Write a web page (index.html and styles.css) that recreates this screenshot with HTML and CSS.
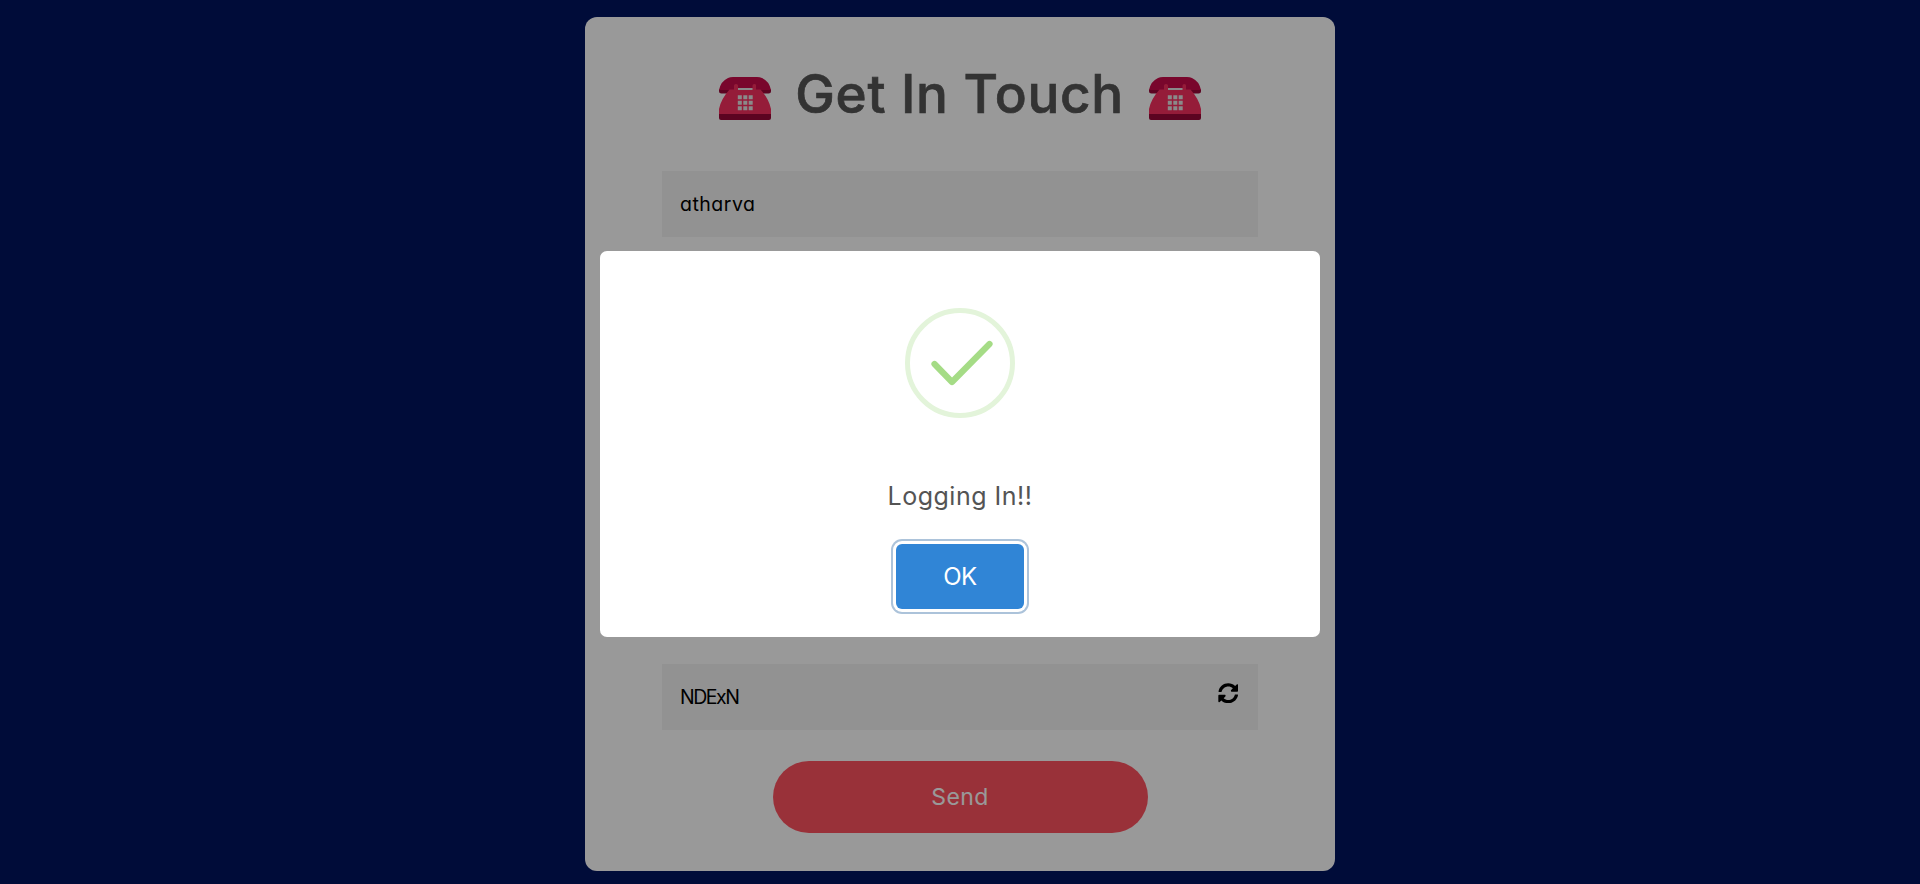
FILE: index.html
```html
<!DOCTYPE html>
<html lang="en">
<head>
<meta charset="utf-8">
<title>Get In Touch</title>
<link rel="stylesheet" href="styles.css">
</head>
<body>
<svg width="0" height="0" class="defs">
  <symbol id="phone" viewBox="0 0 52 43">
    <path fill="#990838" d="M0 12.500h17v4H2.500Q0 16.500 0 14zM35 12.500h17V14q0 2.500-2.500 2.500H35z"/>
    <path fill="#ca0b4a" d="M0 13Q2 4 9 1q2-1 5-1h24q3 0 5 1 7 3 9 12H35v-1H17v1z"/>
    <path fill="#e6e6e6" d="M17.500 11h18v3h-18z"/>
    <path fill="#f92f60" d="M15 8.500Q15 7 17 7t2 1.500V13h14.500V8.500q0-1.500 1.800-1.500T37 8.500V12.500h4.500Q50 22 52 32v6H0v-6Q2 22 10.500 12.500H15z"/>
    <path fill="#990838" d="M0 37h52v4q0 2-2 2H2q-2 0-2-2z"/>
    <path fill="#e6e6e6" d="M18.800 18.200h4v4h-4zm5.500 0h4v4h-4zm5.400 0h4v4h-4zm-10.900 5.500h4v4h-4zm5.500 0h4v4h-4zm5.400 0h4v4h-4zm-10.900 5.500h4v4h-4zm5.500 0h4v4h-4zm5.400 0h4v4h-4z"/>
  </symbol>
</svg>
<main class="card">
  <h1 class="title">
    <svg class="phone"><use href="#phone"/></svg>
    <span class="title-text">Get In Touch</span>
    <svg class="phone"><use href="#phone"/></svg>
  </h1>
  <div class="field"><span class="name">atharva</span></div>
  <div class="field field-captcha">
    <span class="code">NDExN</span>
    <svg class="refresh" viewBox="0 0 512 512"><path d="M370.720 133.280C339.458 104.008 298.888 87.962 255.848 88c-77.458.068-144.328 53.178-162.791 126.850-1.344 5.363-6.122 9.150-11.651 9.150H24.103c-7.498 0-13.194-6.807-11.807-14.176C33.933 94.924 134.813 8 256 8c66.448 0 126.791 26.136 171.315 68.685L463.030 40.970C478.149 25.851 504 36.559 504 57.941V192c0 13.255-10.745 24-24 24H345.941c-21.382 0-32.090-25.851-16.971-40.971l41.750-41.749zM32 296h134.059c21.382 0 32.090 25.851 16.971 40.971l-41.750 41.750c31.262 29.273 71.835 45.319 114.876 45.280 77.418-.070 144.315-53.144 162.787-126.849 1.344-5.363 6.122-9.150 11.651-9.150h57.304c7.498 0 13.194 6.807 11.807 14.176C478.067 417.076 377.187 504 256 504c-66.448 0-126.791-26.136-171.315-68.685L48.970 471.030C33.851 486.149 8 475.441 8 454.059V320c0-13.255 10.745-24 24-24z"/></svg>
  </div>
  <button class="send"><span>Send</span></button>
</main>
<div class="overlay">
  <section class="dialog">
    <svg class="success" viewBox="0 0 110 110">
      <circle cx="55" cy="55" r="52.500" fill="none" stroke="#e3f4da" stroke-width="5"/>
      <path d="M29.500 56L47 74 84.500 36" fill="none" stroke="#a5dc86" stroke-width="6.200" stroke-linecap="round" stroke-linejoin="round"/>
    </svg>
    <p class="message">Logging In!!</p>
    <button class="ok"><span>OK</span></button>
  </section>
</div>
</body>
</html>
```
FILE: styles.css
```css
* { box-sizing: border-box; }
body {
  margin: 0;
  height: 884px;
  padding-top: 17px;
  overflow: hidden;
  background: #00145f;
  font-family: Inter, "Liberation Sans", sans-serif;
  font-feature-settings: "cv11";
}
.defs { position: absolute; }
button { border: 0; font: inherit; font-feature-settings: inherit; color: #fff; }
.card {
  width: 750px;
  height: 854px;
  margin: 0 auto;
  padding: 44px 77px 38px;
  border-radius: 12px;
  background: #fff;
  display: flex;
  flex-direction: column;
}
.title {
  display: flex;
  justify-content: center;
  align-items: center;
  gap: 24px;
  height: 66px;
  margin: 0 0 44px;
  color: #555;
  font-size: 53px;
  font-weight: 500;
  line-height: 66px;
}
.title-text {
  width: 329.500px;
  white-space: nowrap;
  letter-spacing: .7px;
  -webkit-text-stroke: .7px #555;
}
.phone { width: 52px; height: 43px; margin-top: 9px; flex: none; }
.field {
  height: 66px;
  padding: 0 20px 0 18px;
  display: flex;
  align-items: center;
  justify-content: space-between;
  background: #f4f4f4;
  color: #000;
  font-size: 19.500px;
}
.name { letter-spacing: .5px; margin-bottom: 1px; }
.code { letter-spacing: -1.500px; }
.field-captcha { margin-top: auto; }
.refresh { width: 20.500px; height: 20.500px; margin-bottom: 8px; }
.send {
  width: 375px;
  height: 72px;
  margin: 31px auto 0;
  border-radius: 36px;
  background: #ff5260;
  font-size: 23px;
  letter-spacing: .4px;
}
.overlay {
  position: fixed;
  inset: 0;
  display: flex;
  align-items: center;
  justify-content: center;
  padding-top: 4px;
  background: rgba(0, 0, 0, .4);
}
.dialog {
  width: 720px;
  height: 386px;
  padding-top: 57px;
  border-radius: 7px;
  background: #fff;
  display: flex;
  flex-direction: column;
  align-items: center;
}
.success { width: 110px; height: 110px; }
.message {
  margin: 59px 0 0;
  height: 38px;
  line-height: 38px;
  color: #545454;
  font-size: 25px;
  letter-spacing: .5px;
  white-space: nowrap;
}
.ok {
  width: 128px;
  height: 65px;
  margin-top: 29px;
  border-radius: 6px;
  background: #3085d6;
  box-shadow: 0 0 0 3px #fff, 0 0 0 5px #acc3da;
  font-size: 24px;
  letter-spacing: -.5px;
}
```
